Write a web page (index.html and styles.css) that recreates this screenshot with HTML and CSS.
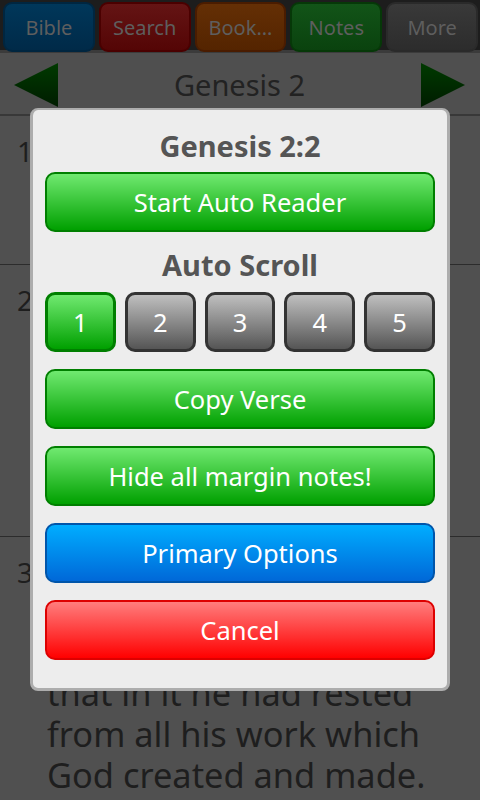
FILE: index.html
```html
<!DOCTYPE html>
<html>
<head>
<meta charset="utf-8">
<link rel="stylesheet" href="styles.css">
</head>
<body>
<div class="app">
  <nav class="tabs">
    <div class="tab tab-bible">Bible</div>
    <div class="tab tab-search">Search</div>
    <div class="tab tab-book">Book...</div>
    <div class="tab tab-notes">Notes</div>
    <div class="tab tab-more">More</div>
  </nav>
  <header class="chapter-bar">
    <svg class="arrow" width="44" height="44" viewBox="0 0 44 44"><defs><linearGradient id="ga" x1="0" y1="0" x2="0" y2="1"><stop offset="0" stop-color="#003a00"/><stop offset="1" stop-color="#001c00"/></linearGradient></defs><polygon points="0,22 44,0 44,44" fill="url(#ga)"/></svg>
    <div class="chapter-title">Genesis 2</div>
    <svg class="arrow" width="44" height="44" viewBox="0 0 44 44"><polygon points="44,22 0,0 0,44" fill="url(#ga)"/></svg>
  </header>
  <main class="verses">
    <div class="verse">
      <span class="vnum">1</span>
      <p class="vtext">Thus the heavens and<br>the earth were finished,<br>and all the host of them.</p>
    </div>
    <div class="verse">
      <span class="vnum">2</span>
      <p class="vtext">And on the seventh day<br>God ended his work<br>which he had made;<br>and he rested on the<br>seventh day from all his<br>work which he had made.</p>
    </div>
    <div class="verse">
      <span class="vnum">3</span>
      <p class="vtext">And God blessed the<br>seventh day, and<br>sanctified it: because<br>that in it he had rested<br>from all his work which<br>God created and made.</p>
    </div>
  </main>

  <div class="dialog">
    <div class="dlg-title">Genesis 2:2</div>
    <div class="btn btn-green">Start Auto Reader</div>
    <div class="dlg-sub">Auto Scroll</div>
    <div class="speeds">
      <div class="speed speed-on">1</div>
      <div class="speed">2</div>
      <div class="speed">3</div>
      <div class="speed">4</div>
      <div class="speed">5</div>
    </div>
    <div class="btn btn-green">Copy Verse</div>
    <div class="btn btn-green">Hide all margin notes!</div>
    <div class="btn btn-blue">Primary Options</div>
    <div class="btn btn-red">Cancel</div>
  </div>
</div>
</body>
</html>
```

FILE: styles.css
```css
* { box-sizing: border-box; }
html, body {
  margin: 0;
  padding: 0;
  width: 480px;
  height: 800px;
  overflow: hidden;
  background: #505050;
  font-family: "Noto Sans", "Open Sans", sans-serif;
}
.app {
  position: relative;
  width: 480px;
  height: 800px;
  overflow: hidden;
}
.tabs {
  display: flex;
  gap: 4px;
  padding: 2px 2px 1px 3px;
  height: 53px;
  background: #1d1d1d;
  border-bottom: 3px solid #3b3b3b;
}
.tab {
  flex: 1;
  height: 50px;
  border-radius: 9px;
  border: 2px solid;
  display: flex;
  align-items: center;
  justify-content: center;
  color: #5e5e5e;
  font-size: 20px;
}
.tab-bible { background: linear-gradient(#00375a, #002a48); border-color: #002640; }
.tab-search { background: linear-gradient(#641414, #540505); border-color: #4a0000; }
.tab-book { background: linear-gradient(#642f05, #542400); border-color: #4a1c00; }
.tab-notes { background: linear-gradient(#125418, #0a420e); border-color: #063808; }
.tab-more { background: linear-gradient(#393939, #2c2c2c); border-color: #2a2a2a; }

.chapter-bar {
  height: 63px;
  background: #4f4f4f;
  border-bottom: 2px solid #383838;
  display: flex;
  align-items: center;
  justify-content: space-between;
  padding: 2px 15px 0 14px;
}
.chapter-title {
  color: #222;
  font-size: 29px;
}
.arrow { display: block; }

.verses { display: flex; flex-direction: column; }
.verse {
  display: flex;
  align-items: baseline;
  padding: 12px 0 13px 0;
  border-bottom: 1px solid #2c2c2c;
}
.vnum {
  width: 47px;
  padding-left: 17px;
  font-size: 28px;
  color: #1e1e1e;
}
.vtext {
  margin: 0;
  max-width: 398px;
  overflow: hidden;
  font-size: 34.4px;
  line-height: 41px;
  color: #1e1e1e;
  white-space: nowrap;
}

.dialog {
  position: absolute;
  left: 30px;
  top: 108px;
  width: 420px;
  height: 583px;
  background: #ededed;
  border: 3px solid #adadad;
  border-top-width: 2px;
  border-radius: 8px;
  padding: 18px 12px 0 12px;
  display: flex;
  flex-direction: column;
}
.dlg-title, .dlg-sub {
  text-align: center;
  font-weight: bold;
  color: #555;
  font-size: 29px;
}
.dlg-title { line-height: 36px; margin-bottom: 8px; }
.dlg-sub { line-height: 30px; margin: 1px 0 12px; }
.btn {
  height: 60px;
  border-radius: 10px;
  border: 2px solid;
  display: flex;
  align-items: center;
  justify-content: center;
  color: #fff;
  font-size: 25.5px;
  margin-bottom: 17px;
}
.btn-green { background: linear-gradient(#70e970, #00a000); border-color: #007f00; }
.btn-blue { background: linear-gradient(#00adff, #0068d8); border-color: #0055aa; }
.btn-red { background: linear-gradient(#ff7d7d, #ff0000); border-color: #dd0000; }
.speeds {
  display: grid;
  grid-template-columns: repeat(5, 1fr);
  gap: 9px;
  margin-bottom: 17px;
}
.speed {
  height: 60px;
  border-radius: 10px;
  border: 3px solid #333;
  background: linear-gradient(#bfbfbf, #555);
  display: flex;
  align-items: center;
  justify-content: center;
  color: #fff;
  font-size: 25.5px;
}
.speed-on {
  background: linear-gradient(#70e970, #00a000);
  border-color: #007f00;
}
```
